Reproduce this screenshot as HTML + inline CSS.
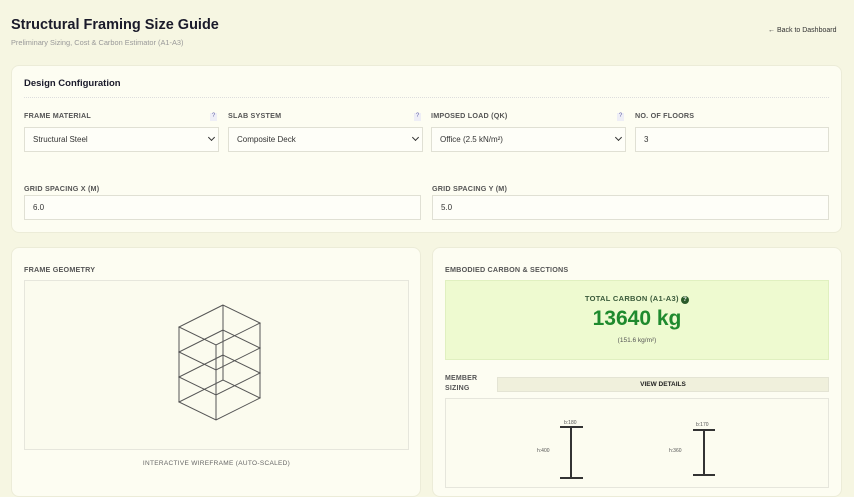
<!DOCTYPE html>
<html><head><style>
*{box-sizing:border-box;margin:0;padding:0}
body{width:854px;height:480px;overflow:hidden;background:#f6f6e2;font-family:"Liberation Sans",sans-serif;position:relative;color:#222}
.a{position:absolute}
.card{position:absolute;background:#fdfdf2;border:1px solid #ececd8;border-radius:8px}
.lbl{position:absolute;font-size:7.2px;font-weight:bold;color:#555;letter-spacing:.2px}
.inp{position:absolute;background:#fefef8;border:1px solid #e0e0d4;font-size:8px;color:#333;padding-left:8px;display:flex;align-items:center}
.chev{position:absolute;right:4px;top:7px;width:5px;height:5px;border-right:1.3px solid #333;border-bottom:1.3px solid #333;transform:rotate(45deg)}
.q{position:absolute;font-size:6px;color:#66a;width:7px;height:8px;text-align:center;background:#eeeef6}
</style></head><body>
<div class="a" style="left:11px;top:17px;font-size:14.5px;font-weight:bold;color:#1a1a2a">Structural Framing Size Guide</div>
<div class="a" style="left:11px;top:38px;font-size:7.4px;color:#999">Preliminary Sizing, Cost &amp; Carbon Estimator (A1-A3)</div>
<div class="a" style="left:768px;top:27px;font-size:7px;color:#333">← Back to Dashboard</div>

<div class="card" style="left:11px;top:65px;width:831px;height:168px"></div>
<div class="a" style="left:24px;top:78px;font-size:9.5px;font-weight:bold;color:#1a1a2a">Design Configuration</div>
<div class="a" style="left:24px;top:97px;width:805px;border-top:1px dotted #ddd"></div>
<div class="lbl" style="left:24px;top:111px">FRAME MATERIAL</div><div class="q" style="left:210px;top:113px">?</div>
<div class="lbl" style="left:228px;top:111px">SLAB SYSTEM</div><div class="q" style="left:414px;top:113px">?</div>
<div class="lbl" style="left:431px;top:111px">IMPOSED LOAD (QK)</div><div class="q" style="left:617px;top:113px">?</div>
<div class="lbl" style="left:635px;top:111px">NO. OF FLOORS</div>
<div class="inp" style="left:24px;top:127px;width:195px;height:25px">Structural Steel<span class="chev"></span></div>
<div class="inp" style="left:228px;top:127px;width:195px;height:25px">Composite Deck<span class="chev"></span></div>
<div class="inp" style="left:431px;top:127px;width:195px;height:25px">Office (2.5 kN/m²)<span class="chev"></span></div>
<div class="inp" style="left:635px;top:127px;width:194px;height:25px">3</div>
<div class="lbl" style="left:24px;top:184px">GRID SPACING X (M)</div>
<div class="lbl" style="left:432px;top:184px">GRID SPACING Y (M)</div>
<div class="inp" style="left:24px;top:195px;width:397px;height:25px">6.0</div>
<div class="inp" style="left:432px;top:195px;width:397px;height:25px">5.0</div>

<div class="card" style="left:11px;top:247px;width:410px;height:250px"></div>
<div class="lbl" style="left:24px;top:265px">FRAME GEOMETRY</div>
<div class="a" style="left:24px;top:280px;width:385px;height:170px;border:1px solid #e6e6dc;background:#fbfbee"></div>
<svg class="a" style="left:0;top:0" width="854" height="480"><g stroke="#555" stroke-width="1" fill="none">
<path d="M223 305L179 327L216 345L260 323Z M223 330L179 352L216 370L260 348Z M223 355L179 377L216 395L260 373Z M223 380L179 402L216 420L260 398Z"/>
<path d="M223 305V380 M179 327V402 M216 345V420 M260 323V398"/></g></svg>
<div class="a" style="left:24px;top:460px;width:385px;text-align:center;font-size:6.5px;color:#666;letter-spacing:.3px">INTERACTIVE WIREFRAME (AUTO-SCALED)</div>

<div class="card" style="left:432px;top:247px;width:410px;height:250px"></div>
<div class="lbl" style="left:445px;top:265px">EMBODIED CARBON &amp; SECTIONS</div>
<div class="a" style="left:445px;top:280px;width:384px;height:80px;background:#eefad0;border:1px solid #e0f0c0"></div>
<div class="a" style="left:445px;top:294px;width:384px;text-align:center;font-size:7.5px;font-weight:bold;color:#3a5a3a;letter-spacing:.3px">TOTAL CARBON (A1-A3) <span style="display:inline-block;width:8px;height:8px;border-radius:50%;background:#2a5a2a;color:#fff;font-size:6px;line-height:8px">?</span></div>
<div class="a" style="left:445px;top:307px;width:384px;text-align:center;font-size:21px;font-weight:bold;color:#1f8a2e">13640 kg</div>
<div class="a" style="left:445px;top:337px;width:384px;text-align:center;font-size:6.5px;color:#555">(151.6 kg/m²)</div>
<div class="lbl" style="left:445px;top:374px;line-height:10px;font-size:7px">MEMBER<br>SIZING</div>
<div class="a" style="left:497px;top:377px;width:332px;height:15px;background:#f0f0dc;border:1px solid #e4e4d4;font-size:6.5px;font-weight:bold;text-align:center;line-height:13px;color:#222">VIEW DETAILS</div>
<div class="a" style="left:445px;top:398px;width:384px;height:90px;border:1px solid #e6e6dc;background:#fcfcf0"></div>
<svg class="a" style="left:0;top:0" width="854" height="480"><g stroke="#333" stroke-width="2" fill="none">
<path d="M560 427H583 M571 427V478 M560 478H583 M693 430H715 M704 430V475 M693 475H715"/></g>
<g font-size="5" fill="#555" font-family="Liberation Sans"><text x="564" y="424">b:180</text><text x="537" y="452">h:400</text><text x="696" y="426">b:170</text><text x="669" y="452">h:360</text></g></svg>
</body></html>
